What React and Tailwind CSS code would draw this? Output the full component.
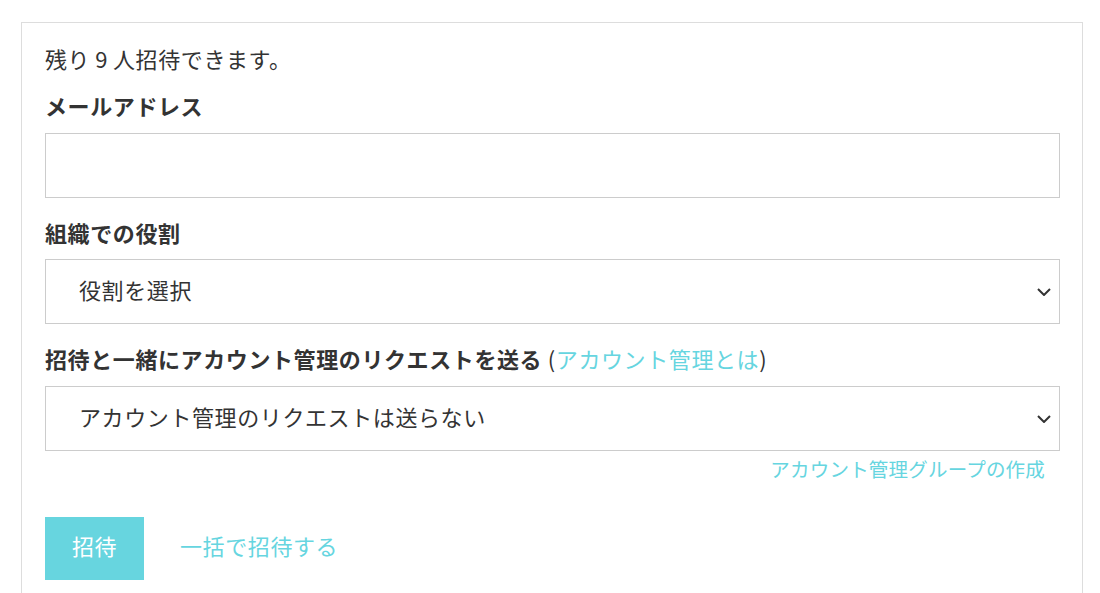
import React from "react";

const font = { fontFamily: '"Noto Sans CJK JP", "Noto Sans", sans-serif' };

function Chevron() {
  return (
    <svg
      className="pointer-events-none absolute right-[8px] top-1/2 -translate-y-1/2"
      width="14"
      height="8"
      viewBox="0 0 14 8"
      fill="none"
    >
      <polyline points="1,1 7,7 13,1" stroke="#333" strokeWidth="2" fill="none" />
    </svg>
  );
}

function Select({ children }) {
  return (
    <div className="relative h-[65px] w-[1015px] border border-[#cccccc] bg-white">
      <div className="flex h-full items-center pb-[4px] pl-[33px] text-[22px] tracking-[0.6px] text-[#333333]">
        {children}
      </div>
      <Chevron />
    </div>
  );
}

export default function App() {
  return (
    <div className="min-h-[593px] bg-white" style={font}>
      <div className="h-[22px]" />
      <div className="ml-[21px] w-[1062px] border border-[#dddddd] bg-white pb-[40px] pl-[23px] pr-[22px] pt-[21px]">
        <div className="h-[33px] leading-[28px] text-[22px] tracking-[0.6px] text-[#333333]">
          残り<span className="mx-[5px]">9</span>人招待できます。
        </div>
        <div className="mt-[14px] h-[33px] leading-[28px] text-[22px] font-bold tracking-[0.6px] text-[#333333]">
          メールアドレス
        </div>
        <div className="mt-[9px] h-[65px] w-[1015px] border border-[#cccccc] bg-white" />
        <div className="mt-[20px] h-[33px] leading-[29px] text-[22px] font-bold tracking-[0.6px] text-[#333333]">
          組織での役割
        </div>
        <div className="mt-[8px]">
          <Select>役割を選択</Select>
        </div>
        <div className="mt-[20px] h-[33px] leading-[29px] text-[22px] tracking-[0.6px] text-[#333333]">
          <span className="font-bold">招待と一緒にアカウント管理のリクエストを送る</span>{" "}
          (<span className="text-[#66d5e0]">アカウント管理とは</span>)
        </div>
        <div className="mt-[9px]">
          <Select>アカウント管理のリクエストは送らない</Select>
        </div>
        <div className="mt-[2px] flex h-[33px] w-[1015px] justify-end pr-[15px] leading-[32px] text-[19.5px] tracking-[0.2px] text-[#66d5e0]">
          アカウント管理グループの作成
        </div>
        <div className="mt-[31px] flex items-center">
          <div className="flex h-[63px] w-[99px] items-center justify-center bg-[#67d5df] pb-[6px] text-[22px] tracking-[0.6px] text-white">
            招待
          </div>
          <div className="ml-[36px] pb-[6px] text-[22px] tracking-[0.6px] text-[#66d5e0]">一括で招待する</div>
        </div>
      </div>
    </div>
  );
}
